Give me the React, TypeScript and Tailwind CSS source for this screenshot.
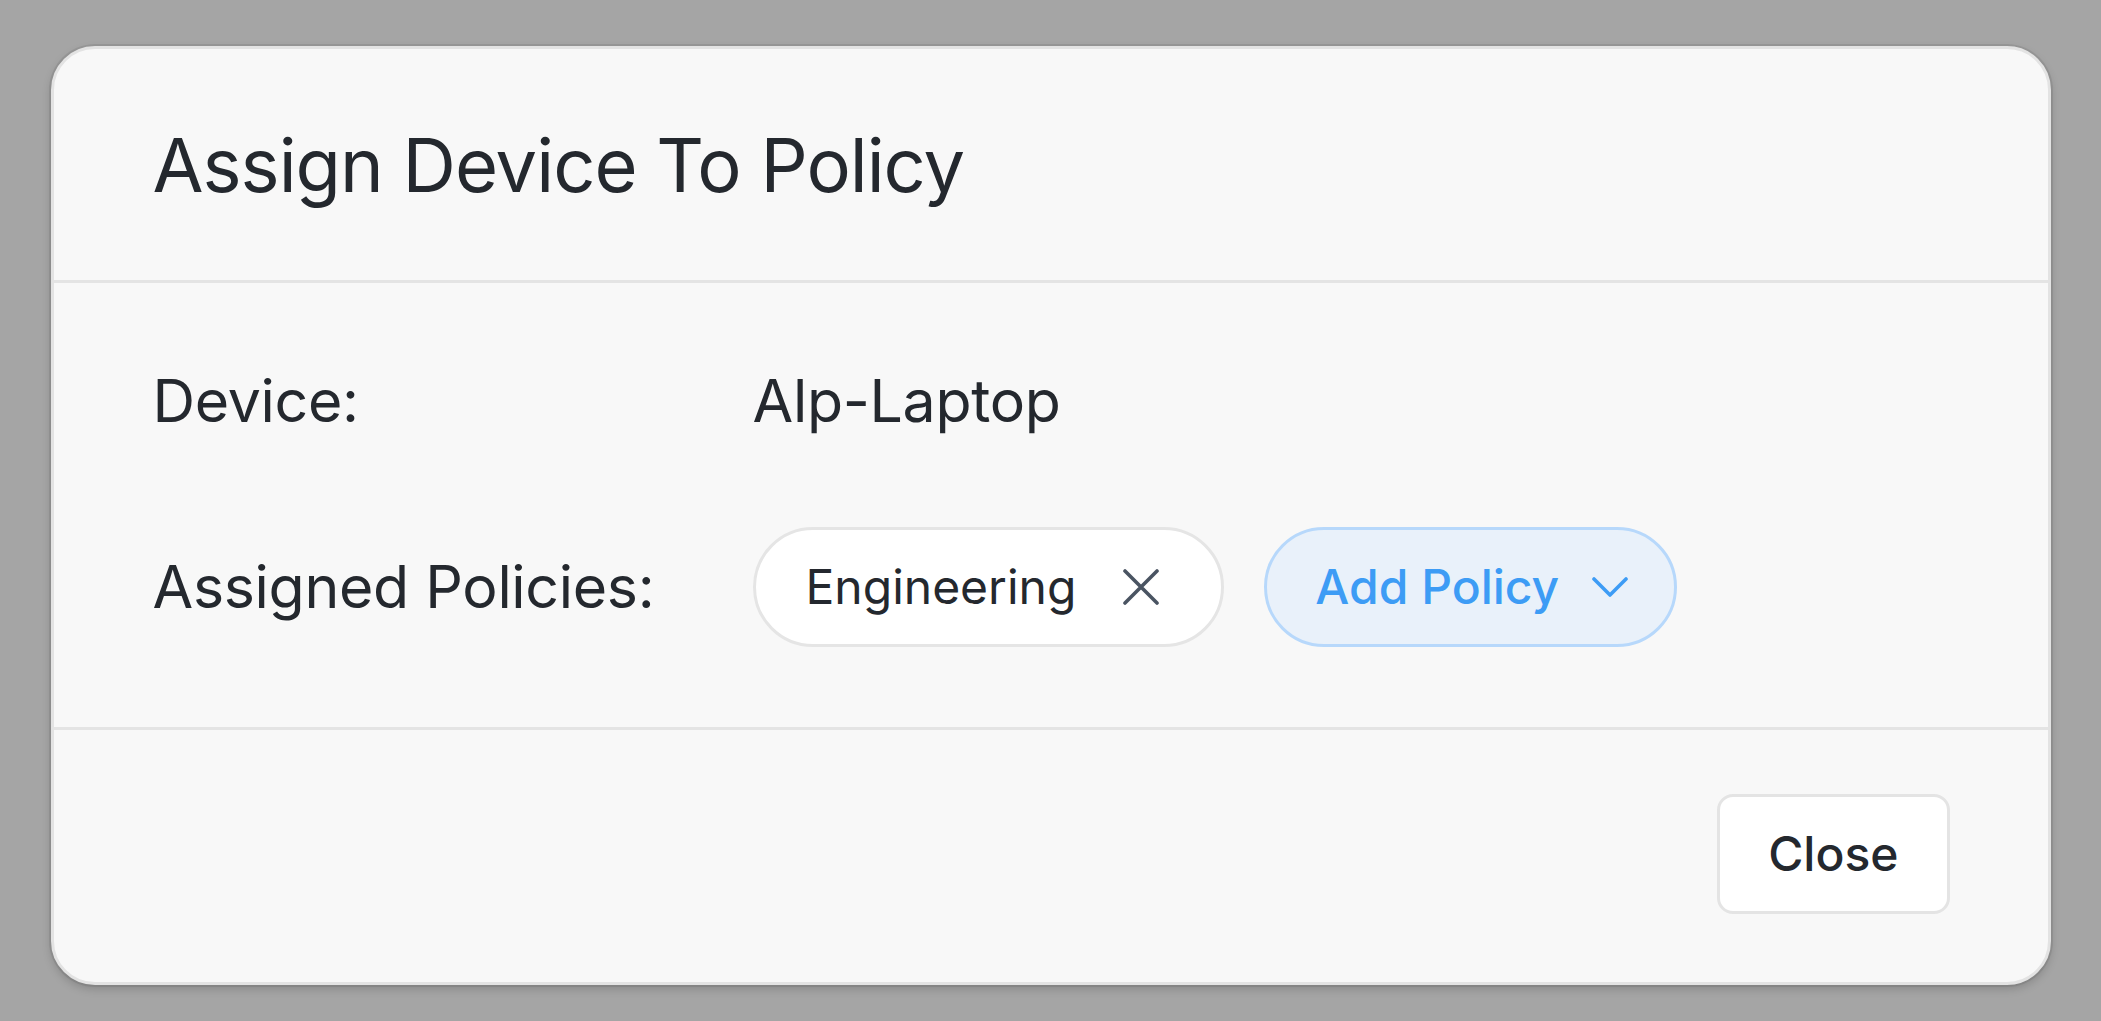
import React from 'react';

const Cross: React.FC = () => (
  <svg width="36" height="36" viewBox="0 0 36 36" fill="none" stroke="#4a5462" strokeWidth="3.6" strokeLinecap="round">
    <path d="M2 2L34 34M34 2L2 34" />
  </svg>
);

const Chevron: React.FC = () => (
  <svg width="36" height="20" viewBox="0 0 36 20" fill="none" stroke="#3d9cf5" strokeWidth="3.6" strokeLinecap="round" strokeLinejoin="round">
    <path d="M2 2L18 18L34 2" />
  </svg>
);

const App: React.FC = () => {
  return (
    <div
      className="w-full h-[1021px] bg-[#a5a5a5] pt-[46px] overflow-hidden text-[#24282e]"
      style={{ fontFamily: 'Inter, "Noto Sans", sans-serif' }}
    >
      <div className="mx-auto w-[2000px] bg-[#f8f8f8] border-[3px] border-[#e3e3e3] rounded-[44px] shadow-[0_0_0_2px_rgba(0,0,0,0.07),0_4px_10px_rgba(0,0,0,0.18)] overflow-hidden">
        {/* Header */}
        <div className="h-[234px] flex items-center px-[99px] border-b-[3px] border-[#e4e4e4]">
          <h2 className="text-[74px] leading-none font-normal tracking-[-1px]">Assign Device To Policy</h2>
        </div>

        {/* Body */}
        <div className="px-[99px] pt-[73px] pb-[80px] grid grid-cols-[600px_1fr] gap-y-[81px] items-center text-[59px] tracking-[-0.3px]">
          <div className="h-[90px] flex items-center">Device:</div>
          <div className="h-[90px] flex items-center">Alp-Laptop</div>

          <div className="flex items-center">Assigned Policies:</div>
          <div className="flex items-center gap-[40px] tracking-normal">
            <div className="h-[120px] flex items-center gap-[47px] pl-[50px] pr-[62px] bg-white border-[3px] border-[#e5e5e5] rounded-full">
              <span className="text-[48px] leading-none">Engineering</span>
              <Cross />
            </div>
            <button className="h-[120px] flex items-center gap-[33px] pl-[48px] pr-[46px] bg-[#e9f1fa] border-[3px] border-[#b7d8fb] rounded-full">
              <span className="text-[48px] leading-none font-medium text-[#3d9cf5]">Add Policy</span>
              <Chevron />
            </button>
          </div>
        </div>

        {/* Footer */}
        <div className="border-t-[3px] border-[#e4e4e4] flex justify-end pt-[64px] pb-[68px] px-[98px]">
          <button className="h-[120px] px-[48px] bg-white border-[3px] border-[#e4e4e4] rounded-[16px] text-[48px] font-medium leading-none text-[#24282e]">
            Close
          </button>
        </div>
      </div>
    </div>
  );
};

export default App;
